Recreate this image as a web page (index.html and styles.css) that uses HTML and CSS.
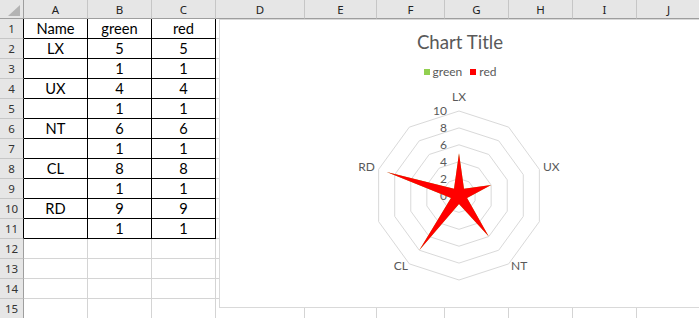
FILE: index.html
```html
<!DOCTYPE html>
<html lang="en">
<head>
    <meta charset="UTF-8">
    <title>Radar chart sheet</title>
    <link rel="stylesheet" href="styles.css">
</head>
<body>

<div class="sheet">
    <!-- column headers -->
    <div class="hd corner">
        <svg width="23" height="18" viewBox="0 0 23 18"><polygon points="20,5 20,16 8,16" fill="#b4b4b4"/></svg>
    </div>
    <div class="hd col">A</div>
    <div class="hd col">B</div>
    <div class="hd col">C</div>
    <div class="hd col">D</div>
    <div class="hd col">E</div>
    <div class="hd col">F</div>
    <div class="hd col">G</div>
    <div class="hd col">H</div>
    <div class="hd col">I</div>
    <div class="hd col">J</div>

    <!-- rows 1-11 : data table -->
    <div class="hd row in">1</div><div class="c t">Name</div><div class="c t">green</div><div class="c t">red</div><div class="c"></div><div class="c"></div><div class="c"></div><div class="c"></div><div class="c"></div><div class="c"></div><div class="c"></div>
    <div class="hd row in">2</div><div class="c t">LX</div><div class="c t">5</div><div class="c t">5</div><div class="c"></div><div class="c"></div><div class="c"></div><div class="c"></div><div class="c"></div><div class="c"></div><div class="c"></div>
    <div class="hd row in">3</div><div class="c t"></div><div class="c t">1</div><div class="c t">1</div><div class="c"></div><div class="c"></div><div class="c"></div><div class="c"></div><div class="c"></div><div class="c"></div><div class="c"></div>
    <div class="hd row in">4</div><div class="c t">UX</div><div class="c t">4</div><div class="c t">4</div><div class="c"></div><div class="c"></div><div class="c"></div><div class="c"></div><div class="c"></div><div class="c"></div><div class="c"></div>
    <div class="hd row in">5</div><div class="c t"></div><div class="c t">1</div><div class="c t">1</div><div class="c"></div><div class="c"></div><div class="c"></div><div class="c"></div><div class="c"></div><div class="c"></div><div class="c"></div>
    <div class="hd row in">6</div><div class="c t">NT</div><div class="c t">6</div><div class="c t">6</div><div class="c"></div><div class="c"></div><div class="c"></div><div class="c"></div><div class="c"></div><div class="c"></div><div class="c"></div>
    <div class="hd row in">7</div><div class="c t"></div><div class="c t">1</div><div class="c t">1</div><div class="c"></div><div class="c"></div><div class="c"></div><div class="c"></div><div class="c"></div><div class="c"></div><div class="c"></div>
    <div class="hd row in">8</div><div class="c t">CL</div><div class="c t">8</div><div class="c t">8</div><div class="c"></div><div class="c"></div><div class="c"></div><div class="c"></div><div class="c"></div><div class="c"></div><div class="c"></div>
    <div class="hd row in">9</div><div class="c t"></div><div class="c t">1</div><div class="c t">1</div><div class="c"></div><div class="c"></div><div class="c"></div><div class="c"></div><div class="c"></div><div class="c"></div><div class="c"></div>
    <div class="hd row in">10</div><div class="c t">RD</div><div class="c t">9</div><div class="c t">9</div><div class="c"></div><div class="c"></div><div class="c"></div><div class="c"></div><div class="c"></div><div class="c"></div><div class="c"></div>
    <div class="hd row in">11</div><div class="c t"></div><div class="c t">1</div><div class="c t">1</div><div class="c"></div><div class="c"></div><div class="c"></div><div class="c"></div><div class="c"></div><div class="c"></div><div class="c"></div>

    <!-- rows 12-15 : empty -->
    <div class="hd row">12</div><div class="c"></div><div class="c"></div><div class="c"></div><div class="c"></div><div class="c"></div><div class="c"></div><div class="c"></div><div class="c"></div><div class="c"></div><div class="c"></div>
    <div class="hd row">13</div><div class="c"></div><div class="c"></div><div class="c"></div><div class="c"></div><div class="c"></div><div class="c"></div><div class="c"></div><div class="c"></div><div class="c"></div><div class="c"></div>
    <div class="hd row">14</div><div class="c"></div><div class="c"></div><div class="c"></div><div class="c"></div><div class="c"></div><div class="c"></div><div class="c"></div><div class="c"></div><div class="c"></div><div class="c"></div>
    <div class="hd row">15</div><div class="c"></div><div class="c"></div><div class="c"></div><div class="c"></div><div class="c"></div><div class="c"></div><div class="c"></div><div class="c"></div><div class="c"></div><div class="c"></div>

    <!-- chart floats over D1:J15 -->
    <div class="chart">
        <h2 class="chart-title">Chart Title</h2>
        <ul class="legend">
            <li><span class="key key-green"></span>green</li>
            <li><span class="key key-red"></span>red</li>
        </ul>
        <svg class="radar" width="480" height="217" viewBox="220 90 480 217">
            <g transform="translate(459 195.5)" fill="none" stroke="#d9d9d9" stroke-width="1">
                <polygon points="0,-16.9 9.93,-13.67 16.07,-5.22 16.07,5.22 9.93,13.67 0,16.9 -9.93,13.67 -16.07,5.22 -16.07,-5.22 -9.93,-13.67"/>
                <polygon points="0,-33.8 19.87,-27.34 32.15,-10.44 32.15,10.44 19.87,27.34 0,33.8 -19.87,27.34 -32.15,10.44 -32.15,-10.44 -19.87,-27.34"/>
                <polygon points="0,-50.7 29.8,-41.02 48.22,-15.67 48.22,15.67 29.8,41.02 0,50.7 -29.8,41.02 -48.22,15.67 -48.22,-15.67 -29.8,-41.02"/>
                <polygon points="0,-67.6 39.74,-54.69 64.29,-20.89 64.29,20.89 39.74,54.69 0,67.6 -39.74,54.69 -64.29,20.89 -64.29,-20.89 -39.74,-54.69"/>
                <polygon points="0,-84.5 49.67,-68.36 80.37,-26.11 80.37,26.11 49.67,68.36 0,84.5 -49.67,68.36 -80.37,26.11 -80.37,-26.11 -49.67,-68.36"/>
            </g>
            <!-- axis values -->
            <g class="ticks" text-anchor="end">
                <text x="447" y="115">10</text>
                <text x="447" y="132">8</text>
                <text x="447" y="149">6</text>
                <text x="447" y="166">4</text>
                <text x="447" y="183">2</text>
                <text x="447" y="200">0</text>
            </g>
            <!-- green series sits under red (same values) -->
            <g transform="translate(459 195.5)">
                <polygon fill="#92d050" points="0,-42.25 4.97,-6.84 32.15,-10.44 8.04,2.61 29.8,41.02 0,8.45 -39.74,54.69 -8.04,2.61 -72.33,-23.5 -4.97,-6.84"/>
                <polygon fill="#ff0000" points="0,-42.25 4.97,-6.84 32.15,-10.44 8.04,2.61 29.8,41.02 0,8.45 -39.74,54.69 -8.04,2.61 -72.33,-23.5 -4.97,-6.84"/>
            </g>
            <g class="cats">
                <text x="459" y="101" text-anchor="middle">LX</text>
                <text x="543" y="171">UX</text>
                <text x="511" y="270">NT</text>
                <text x="408" y="270" text-anchor="end">CL</text>
                <text x="375" y="171" text-anchor="end">RD</text>
            </g>
        </svg>
    </div>
</div>

</body>
</html>
```

FILE: styles.css
```css
body {
    margin: 0;
    overflow: hidden;
    background-color: #ffffff;
    font-family: Lato, "Open Sans", sans-serif;
}

.sheet {
    position: relative;
    display: grid;
    grid-template-columns: 24px 64px 64px 64px 89px 72px 68px 64px 64px 64px 64px;
    grid-template-rows: 19px repeat(15, 20px);
}

.hd {
    background-color: #e6e6e6;
    box-sizing: border-box;
    border-right: 1px solid #c6c6c6;
    border-bottom: 1px solid #c6c6c6;
    font-family: "Noto Sans", sans-serif;
    font-size: 11.5px;
    color: #222;
    display: flex;
    align-items: center;
    justify-content: center;
}

.hd.col,
.hd.corner {
    border-bottom-color: #9e9e9e;
}

.hd.corner {
    border-right-color: #9e9e9e;
}

.hd.corner svg {
    display: block;
}

.hd.row {
    border-right-color: #9e9e9e;
    color: #333;
}

.hd.row.in {
    border-right-color: #000;
}

.c {
    box-sizing: border-box;
    border-right: 1px solid #d4d4d4;
    border-bottom: 1px solid #d4d4d4;
    font-size: 14.67px;
    line-height: 19px;
    text-align: center;
    color: #000;
}

.c.t {
    border-right-color: #000;
    border-bottom-color: #000;
}

.chart {
    position: absolute;
    left: 219px;
    top: 19px;
    width: 482px;
    height: 289px;
    box-sizing: border-box;
    border: 1px solid #d9d9d9;
    background-color: #ffffff;
    color: #595959;
}

.chart-title {
    margin: 10px 0 0 0;
    font-size: 18.67px;
    font-weight: normal;
    line-height: 24px;
    text-align: center;
    color: #595959;
}

.legend {
    list-style: none;
    margin: 10px 0 0 0;
    padding: 0;
    height: 16px;
    display: flex;
    justify-content: center;
    gap: 8px;
    font-size: 12px;
    line-height: 16px;
}

.legend li {
    display: flex;
    align-items: center;
    gap: 3px;
}

.key {
    width: 6px;
    height: 6px;
}

.key-green {
    background-color: #92d050;
}

.key-red {
    background-color: #ff0000;
}

.radar {
    display: block;
    margin-top: 10px;
}

.radar text {
    font-family: Lato, "Open Sans", sans-serif;
    font-size: 12px;
    fill: #595959;
}
```
